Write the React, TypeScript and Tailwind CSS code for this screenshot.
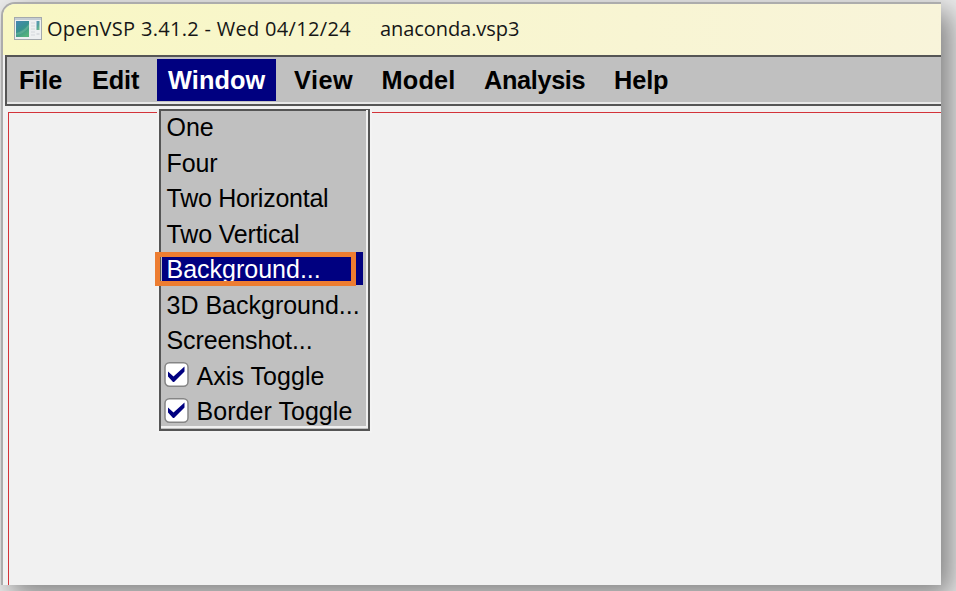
const menus = [
  { label: 'File', box: 'w-[75px] pl-[12px]', text: 'tracking-[-0.100px]' },
  { label: 'Edit', box: 'w-[75px] pl-[10px]', text: 'tracking-[-0.150px]' },
  { label: 'Window', box: 'w-[119px] pl-[11px] bg-[#000080] text-white', text: 'tracking-[0.100px]' },
  { label: 'View', box: 'w-[95px] pl-[18px]', text: 'tracking-[0.500px]' },
  { label: 'Model', box: 'w-[103px] pl-[10.500px]', text: 'tracking-[0.200px]' },
  { label: 'Analysis', box: 'w-[130px] pl-[10px]', text: 'tracking-[-0.350px]' },
  { label: 'Help', box: 'w-[90px] pl-[10px]', text: 'tracking-[-0.100px]' },
];

const commands = [
  { label: 'One', text: 'tracking-normal' },
  { label: 'Four', text: 'tracking-[-0.100px]' },
  { label: 'Two Horizontal', text: 'tracking-[-0.250px]' },
  { label: 'Two Vertical', text: 'tracking-[-0.150px]' },
  { label: 'Background...', text: 'tracking-normal', active: true },
  { label: '3D Background...', text: 'tracking-normal' },
  { label: 'Screenshot...', text: 'tracking-[-0.100px]' },
];

const toggles = ['Axis Toggle', 'Border Toggle'];

function AppIcon() {
  return (
    <svg width="28" height="23" viewBox="0 0 28 23">
      <defs>
        <linearGradient id="teal" x1="0" y1="0" x2="0.6" y2="1">
          <stop offset="0" stopColor="#4788b4" />
          <stop offset="0.55" stopColor="#38918f" />
          <stop offset="1" stopColor="#55b27c" />
        </linearGradient>
      </defs>
      <rect x="0.5" y="0.5" width="27" height="22" fill="#eef0f1" stroke="#a4a9ad" />
      <rect x="1" y="1" width="26" height="2" fill="#c5cdd3" />
      <rect x="2" y="4" width="13" height="16" fill="url(#teal)" />
      <path d="M2 16 Q9 15 15 7 V10 Q10 17 2 18Z" fill="#73bd9e" opacity=".5" />
      <path d="M17 6h4M17 9h4M17 12h4M17 15h4M17 18h4" stroke="#d5d8dc" />
      <rect x="22.5" y="4" width="3" height="9" fill="url(#teal)" opacity=".85" />
      <path d="M22.5 17h3" stroke="#c7cbd0" />
    </svg>
  );
}

function CheckBox() {
  return (
    <svg width="25" height="25" viewBox="0 0 25 25" className="shrink-0">
      <rect x="1" y="0.75" width="23" height="23.5" rx="4.5" fill="#fff" stroke="#858585" strokeWidth="1.500" />
      <path d="M4 9.500 L9.500 14.500 L20.500 4.500 V9.500 L10 20 H9 L4 14.500Z" fill="#000080" />
    </svg>
  );
}

function WindowMenu() {
  return (
    <div className="absolute left-[157px] top-[107px] border-2 border-[#f3f3f3]">
      <div className="h-[322px] w-[211px] border-2 border-[#555] bg-[#c0c0c0]">
        <div className="h-full border-r-2 border-b-2 border-r-[#f0f0f0] border-b-[#f0f0f0]">
          <div className="-mt-px flex flex-col text-[25px] leading-[34px] text-black">
            {commands.map(({ label, text, active }) => (
              <div
                key={label}
                className={
                  active
                    ? 'mr-[3px] ml-px mb-[2.500px] h-[33px] bg-[#000080] pl-[4.500px] text-white'
                    : 'mb-[2.500px] h-[33px] pl-[5.500px]'
                }
              >
                <span className={`whitespace-pre ${text}`}>{label}</span>
              </div>
            ))}
            {toggles.map((label) => (
              <div key={label} className="mb-[2.500px] flex h-[33px] items-center pb-px pl-[3px]">
                <CheckBox />
                <span className="ml-[7.500px] pt-[2px] whitespace-pre tracking-[0.050px]">{label}</span>
              </div>
            ))}
          </div>
        </div>
      </div>
    </div>
  );
}

export default function App() {
  return (
    <div className="relative h-[591px] w-[956px] overflow-hidden bg-[#ebebeb] pt-[2px] pl-px font-['Liberation_Sans',Arial,sans-serif]">
      <div className="flex h-[583px] w-[940px] flex-col rounded-tl-[14px] border-t-2 border-l-2 border-[#acacac] bg-[#f1f1f1] shadow-[10px_10px_28px_rgba(0,0,0,0.45)]">
        <header className="flex h-[51px] shrink-0 items-center rounded-tl-[12px] bg-linear-to-r from-[#f8f7c4] to-[#f8f4da] pb-[3px] pl-[11px] font-['Open_Sans','Noto_Sans',sans-serif] text-[20px] text-[#161616]">
          <AppIcon />
          <span className="ml-[5px] w-[333px] pt-[2px] whitespace-pre tracking-[0.310px]">OpenVSP 3.41.2 - Wed 04/12/24</span>
          <span className="pt-[2px] whitespace-pre tracking-[-0.070px]">anaconda.vsp3</span>
        </header>
        <nav className="ml-[2px] flex h-[51px] shrink-0 border-y-2 border-l-2 border-[#555] bg-[#c0c0c0] shadow-[inset_0_-2px_0_#e8e8e8]">
          {menus.map((m) => (
            <div key={m.label} className={`mt-[2px] h-[42px] shrink-0 text-[25.300px] leading-[43px] font-bold ${m.box}`}>
              <span className={m.text}>{m.label}</span>
            </div>
          ))}
        </nav>
        <main className="mt-[6px] ml-[5px] flex-1 border-t border-l border-[#d33339]" />
      </div>
      <WindowMenu />
      <div className="absolute left-[155px] top-[252px] h-[34px] w-[201px] border-[5px] border-[#ed7d31]" />
    </div>
  );
}
